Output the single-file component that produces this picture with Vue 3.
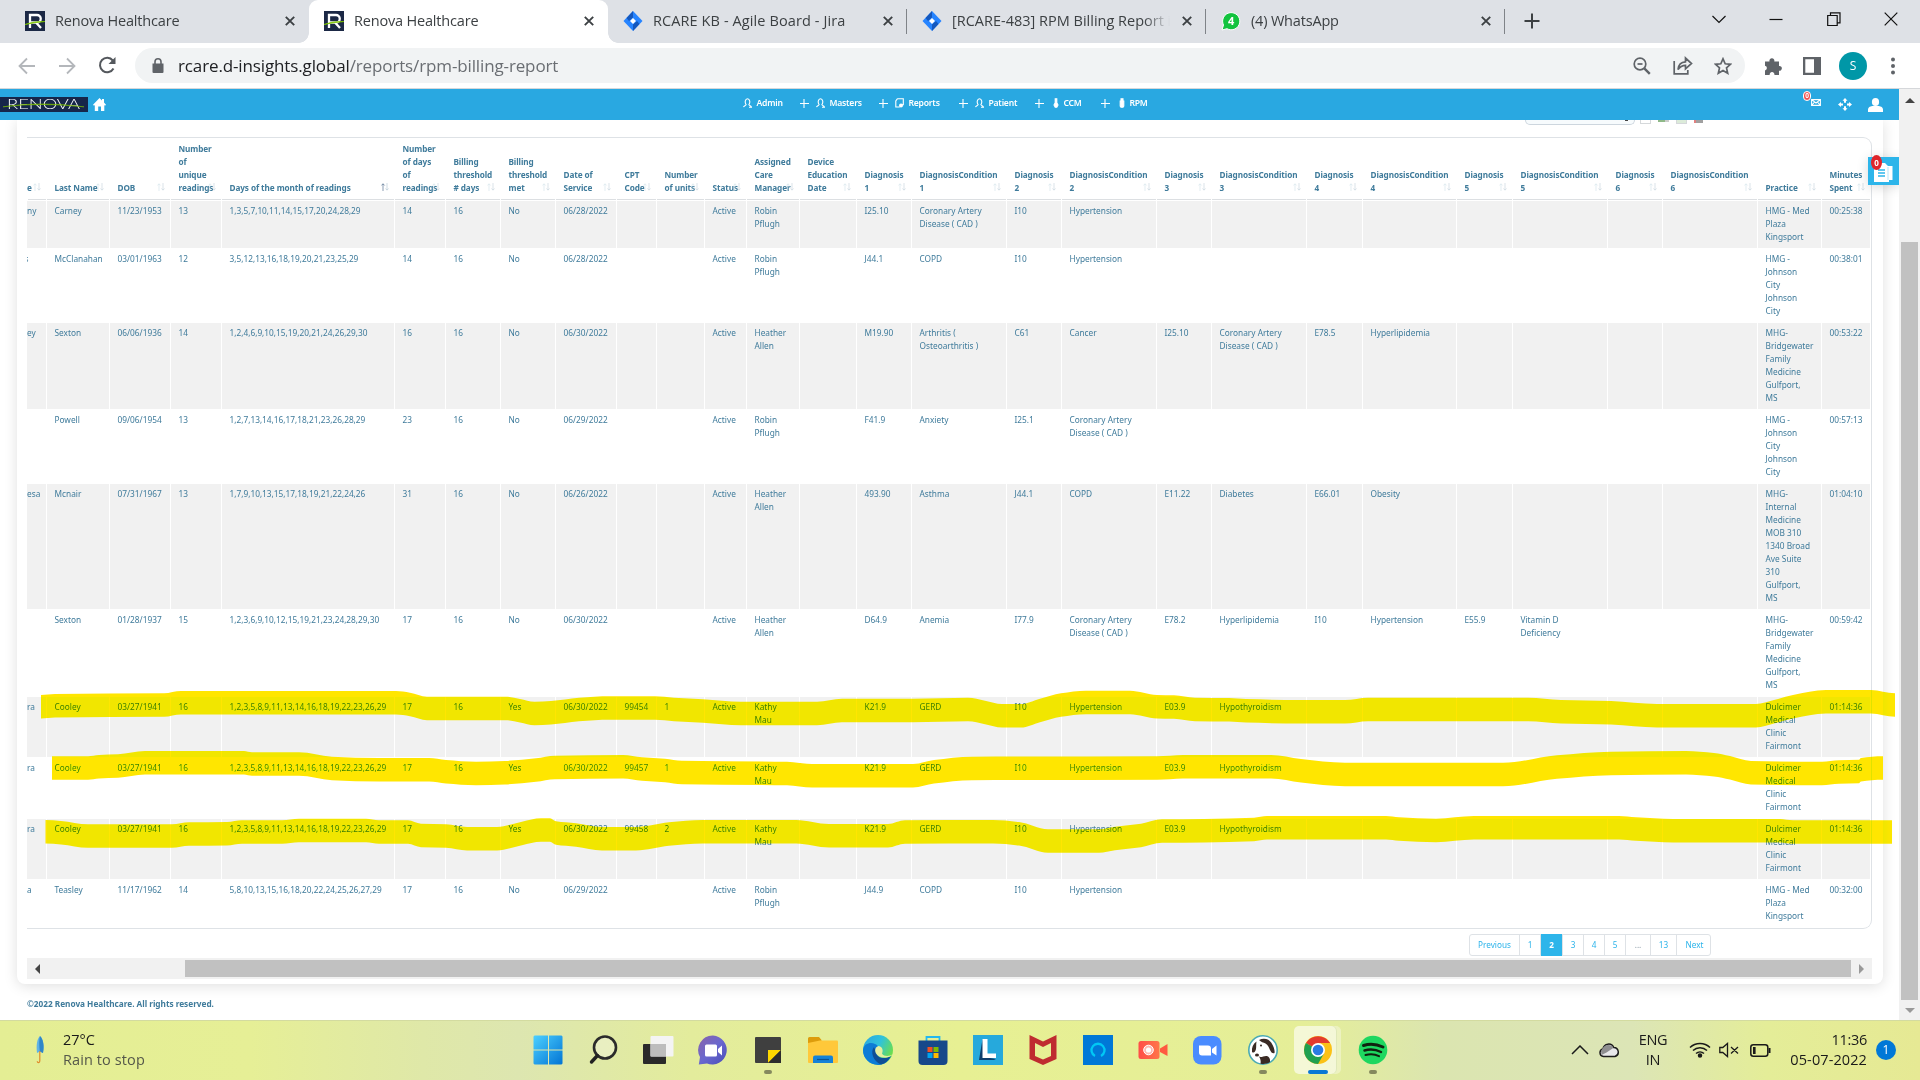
<script setup>
const tabs = [
  { icon: 'renova', title: 'Renova Healthcare' },
  { icon: 'renova', title: 'Renova Healthcare', active: true },
  { icon: 'jira', title: 'RCARE KB - Agile Board - Jira', sep: true, wide: true },
  { icon: 'jira', title: '[RCARE-483] RPM Billing Report i', sep: true, fade: true },
  { icon: 'wa', title: '(4) WhatsApp', sep: true },
]

const menu = [
  { label: 'Admin', icon: 'user', w: 57, first: true },
  { label: 'Masters', icon: 'user', w: 79 },
  { label: 'Reports', icon: 'doc', w: 80 },
  { label: 'Patient', icon: 'user', w: 76 },
  { label: 'CCM', icon: 'thermo', w: 66 },
  { label: 'RPM', icon: 'device', w: 66 },
]

const edges = [27, 46, 109, 170, 221, 394, 445, 500, 555, 616, 656, 704, 746, 799, 856, 911, 1006, 1061, 1156, 1211, 1306, 1362, 1456, 1512, 1607, 1662, 1757, 1821, 1870]
const widths = edges.slice(1).map((e, i) => e - edges[i])

const heads = [
  ['e'], ['Last Name'], ['DOB'], ['Number', 'of', 'unique', 'readings'], ['Days of the month of readings'],
  ['Number', 'of days', 'of', 'readings'], ['Billing', 'threshold', '# days'], ['Billing', 'threshold', 'met'],
  ['Date of', 'Service'], ['CPT', 'Code'], ['Number', 'of units'], ['Status'], ['Assigned', 'Care', 'Manager'],
  ['Device', 'Education', 'Date'], ['Diagnosis', '1'], ['DiagnosisCondition', '1'], ['Diagnosis', '2'],
  ['DiagnosisCondition', '2'], ['Diagnosis', '3'], ['DiagnosisCondition', '3'], ['Diagnosis', '4'],
  ['DiagnosisCondition', '4'], ['Diagnosis', '5'], ['DiagnosisCondition', '5'], ['Diagnosis', '6'],
  ['DiagnosisCondition', '6'], ['Practice'], ['Minutes', 'Spent'],
]

const CAD = 'Coronary Artery|Disease ( CAD )'
function row(h, s) {
  const cells = s.split(';').map((c) => c.trim().split('|'))
  return { h, cells }
}
const cooley = (cpt, n) =>
  `ra;Cooley;03/27/1941;16;1,2,3,5,8,9,11,13,14,16,18,19,22,23,26,29;17;16;Yes;06/30/2022;${cpt};${n};Active;Kathy|Mau;;K21.9;GERD;I10;Hypertension;E03.9;Hypothyroidism;;;;;;;Dulcimer|Medical|Clinic|Fairmont;01:14:36`
const rows = [
  row(48, `ny;Carney;11/23/1953;13;1,3,5,7,10,11,14,15,17,20,24,28,29;14;16;No;06/28/2022;;;Active;Robin|Pflugh;;I25.10;${CAD};I10;Hypertension;;;;;;;;;HMG - Med|Plaza|Kingsport;00:25:38`),
  row(74, `s;McClanahan;03/01/1963;12;3,5,12,13,16,18,19,20,21,23,25,29;14;16;No;06/28/2022;;;Active;Robin|Pflugh;;J44.1;COPD;I10;Hypertension;;;;;;;;;HMG -|Johnson|City|Johnson|City;00:38:01`),
  row(87, `ey;Sexton;06/06/1936;14;1,2,4,6,9,10,15,19,20,21,24,26,29,30;16;16;No;06/30/2022;;;Active;Heather|Allen;;M19.90;Arthritis (|Osteoarthritis );C61;Cancer;I25.10;${CAD};E78.5;Hyperlipidemia;;;;;MHG-|Bridgewater|Family|Medicine|Gulfport,|MS;00:53:22`),
  row(74, `;Powell;09/06/1954;13;1,2,7,13,14,16,17,18,21,23,26,28,29;23;16;No;06/29/2022;;;Active;Robin|Pflugh;;F41.9;Anxiety;I25.1;${CAD};;;;;;;;;HMG -|Johnson|City|Johnson|City;00:57:13`),
  row(126, `esa;Mcnair;07/31/1967;13;1,7,9,10,13,15,17,18,19,21,22,24,26;31;16;No;06/26/2022;;;Active;Heather|Allen;;493.90;Asthma;J44.1;COPD;E11.22;Diabetes;E66.01;Obesity;;;;;MHG-|Internal|Medicine|MOB 310|1340 Broad|Ave Suite|310|Gulfport,|MS;01:04:10`),
  row(87, `;Sexton;01/28/1937;15;1,2,3,6,9,10,12,15,19,21,23,24,28,29,30;17;16;No;06/30/2022;;;Active;Heather|Allen;;D64.9;Anemia;I77.9;${CAD};E78.2;Hyperlipidemia;I10;Hypertension;E55.9;Vitamin D|Deficiency;;;MHG-|Bridgewater|Family|Medicine|Gulfport,|MS;00:59:42`),
  row(61, cooley('99454', 1)),
  row(61, cooley('99457', 1)),
  row(61, cooley('99458', 2)),
  row(48, `a;Teasley;11/17/1962;14;5,8,10,13,15,16,18,20,22,24,25,26,27,29;17;16;No;06/29/2022;;;Active;Robin|Pflugh;;J44.9;COPD;I10;Hypertension;;;;;;;;;HMG - Med|Plaza|Kingsport;00:32:00`),
]

const pages = [
  { t: 'Previous', w: 50 }, { t: '1', w: 21 }, { t: '2', w: 22, on: true }, { t: '3', w: 21 }, { t: '4', w: 21 },
  { t: '5', w: 21 }, { t: '...', w: 25, off: true }, { t: '13', w: 26 }, { t: 'Next', w: 35 },
]

// Upper edge of every marker stroke; the lower edge runs 23.5px below it.
const marks = [
  [[41, 695], [55, 694], [164, 693.3], [181, 691], [396, 691], [410, 692.7], [427, 696.7], [505, 696.7], [520, 699], [534.5, 701.7], [551, 701], [579, 697.7], [610, 696.3], [655, 696.3], [674, 697.7], [703, 699.3], [741, 701.7], [817, 701.7], [842, 698.7], [913, 698.7], [968, 697.7], [985, 700.7], [1002, 704], [1021, 704], [1040, 698.7], [1061, 693.3], [1086, 690.7], [1130, 690.7], [1157, 695], [1174, 695.3], [1195, 697.7], [1229, 698], [1246, 699], [1300, 700], [1345, 700], [1368, 697.7], [1528, 697.7], [1561, 700], [1611, 701], [1657, 704], [1756, 704], [1774, 700], [1793, 695], [1826, 690], [1871, 690], [1895, 693.3]],
  [[52, 756.3], [88, 756.3], [99, 755], [118, 754.3], [145, 751], [244, 751], [252, 752.3], [299, 752.3], [332, 756.7], [379, 758], [429, 758], [446, 760], [476, 761.7], [505, 761], [536, 758.3], [555, 755.7], [623, 755], [642, 757.3], [665, 758.7], [682, 760.7], [787, 761.7], [812, 764], [913, 764], [934, 760], [972, 756.7], [1157, 756.3], [1183, 755], [1271, 755], [1301, 759], [1345, 762.7], [1503, 762.7], [1557, 755.3], [1611, 751.7], [1686, 751], [1714, 753], [1730, 756], [1751, 761], [1822, 761.7], [1839, 760.3], [1859, 759.7], [1861, 758], [1883, 756.3]],
  [[45.5, 820], [61, 821], [88, 824.3], [172, 824.3], [189, 822.3], [227, 822], [242, 820.3], [282, 820.3], [299, 818.7], [366, 818.7], [379, 820.3], [408, 820.3], [421, 823.7], [446, 824.3], [467, 827], [497, 827], [522, 821.7], [541, 818.3], [550, 818.3], [556, 821.3], [576, 823.3], [602, 827], [636, 827], [669, 822.3], [703, 820], [796, 820], [829, 824], [888, 824], [905, 820.3], [993, 820], [1019, 822], [1048, 829.3], [1099, 829.3], [1115, 826.7], [1141, 823.7], [1162, 819.3], [1204, 819], [1254, 817.7], [1267, 816], [1386, 816], [1399, 817.3], [1436, 818.7], [1474, 816], [1619, 816], [1636, 817.3], [1673, 819], [1780, 819], [1793, 820.3], [1892, 820.3]],
]
function curve(p) {
  const d = p.slice(1).map((q, i) => (q[1] - p[i][1]) / (q[0] - p[i][0]))
  const m = p.map((_, i) => {
    const a = d[i - 1], b = d[i]
    return a === undefined || b === undefined || a * b <= 0 ? 0 : (2 * a * b) / (a + b)
  })
  return p.slice(1).map((q, i) => {
    const k = (q[0] - p[i][0]) / 3
    return `C${p[i][0] + k} ${p[i][1] + m[i] * k} ${q[0] - k} ${q[1] - m[i + 1] * k} ${q[0]} ${q[1]}`
  }).join('')
}
function band(p) {
  const low = p.map(([x, y]) => [x, y + 23.5]).reverse()
  return `M${p[0]}${curve(p)}L${low[0]}${curve(low)}Z`
}
const bands = marks.map(band)
</script>

<template>
  <div class="screen">
    <header class="tabstrip">
      <div v-for="(t, i) in tabs" :key="i" class="tab" :class="{ active: t.active, sep: t.sep }">
        <svg v-if="t.icon === 'renova'" class="fav" viewBox="0 0 20 20">
          <rect width="20" height="20" fill="#1b2845" />
          <path d="M5 17V4h7a3.6 3.6 0 0 1 0 7.500H5M11 11.500l5 5.500" fill="none" stroke="#fff" stroke-width="2.300" />
          <path d="M0 13.500Q8 10 20 10.500Q9 11.500 0 13.500Z" fill="#8bd000" stroke="#7cc400" stroke-width=".7" />
        </svg>
        <svg v-else-if="t.icon === 'jira'" class="fav" viewBox="0 0 20 20">
          <path d="M10 0l9.500 10L10 20 .5 10z" fill="#2684ff" />
          <path d="M10 0v6.500L6 10 3.500 7zM10 20v-6.500l4-3.500 2.500 3z" fill="#1558bd" />
          <path d="M10 7l3 3-3 3-3-3z" fill="#fff" />
        </svg>
        <svg v-else class="fav" viewBox="0 0 20 20">
          <path d="M1 19l1.500-5A8.600 8.600 0 1 1 6 17.700z" fill="#12c33e" stroke="#fff" stroke-width="1" />
          <text x="10.200" y="14" text-anchor="middle" class="wa4">4</text>
        </svg>
        <span class="ttl" :class="{ fade: t.fade, wide: t.wide }">{{ t.title }}</span>
        <svg class="x" viewBox="0 0 10 10"><path d="M.8.8l8.400 8.400M9.200.8L.8 9.200" stroke="#3c4043" stroke-width="1.900" /></svg>
      </div>
      <svg class="plus" viewBox="0 0 16 16"><path d="M8 .5v15M.5 8h15" stroke="#3c4043" stroke-width="2" /></svg>
      <div class="winctl">
        <svg width="14" height="14" viewBox="0 0 14 14"><path d="M.5 4l6.500 6.500L13.500 4" /></svg>
        <svg width="14" height="14" viewBox="0 0 14 14"><path d="M.5 7.500h13" /></svg>
        <svg width="14" height="14" viewBox="0 0 14 14"><path d="M.7 3.500h9.500v10H.7zM3.500 3.500V.8h9.500v10h-2.500" /></svg>
        <svg width="14" height="14" viewBox="0 0 14 14"><path d="M.7.7l12.600 12.600M13.300.7L.7 13.300" /></svg>
      </div>
    </header>

    <div class="toolbar">
      <div class="navbtns">
        <svg width="18" height="18" viewBox="0 0 18 18"><path d="M17 9H2M9 1.500L1.500 9 9 16.500" fill="none" stroke="#b4b7bb" stroke-width="1.800" /></svg>
        <svg width="18" height="18" viewBox="0 0 18 18"><path d="M1 9h15M9 1.500L16.500 9 9 16.500" fill="none" stroke="#b4b7bb" stroke-width="1.800" /></svg>
        <svg width="19" height="19" viewBox="0 0 19 19"><path d="M15.500 12.500A7.200 7.200 0 1 1 14.800 4.500" fill="none" stroke="#54585d" stroke-width="2" /><path d="M17.500 1v7h-7z" fill="#54585d" /></svg>
      </div>
      <div class="omni">
        <svg class="lock" width="12" height="15" viewBox="0 0 12 15"><path d="M.5 5.500h11V14a1 1 0 0 1-1 1h-9a1 1 0 0 1-1-1z" fill="#5f6368" /><path d="M3 6V3.800a3 3 0 0 1 6 0V6" fill="none" stroke="#5f6368" stroke-width="1.600" /></svg>
        <span class="url"><b>rcare.d-insights.global</b>/reports/rpm-billing-report</span>
        <div class="oicons">
          <svg width="18" height="18" viewBox="0 0 18 18"><circle cx="7" cy="7" r="5.800" /><path d="M11.300 11.300l5.500 5.500" stroke-width="2.400" /><path d="M4.500 7h5" /></svg>
          <svg width="20" height="19" viewBox="0 0 20 19"><path d="M1.200 5v12.800h13.600V14" /><path d="M5 13.500C5.500 8.500 8 6 12.500 5.800V2l6 5.500-6 5.300V9.300C9 9.300 7 10.500 5 13.500z" /></svg>
          <svg width="18" height="18" viewBox="0 0 18 18"><path d="M9 1.800l2.200 5 5.300.5-4 3.600 1.200 5.300L9 13.400l-4.700 2.800 1.200-5.300-4-3.600 5.300-.5z" /></svg>
        </div>
      </div>
      <div class="ext">
        <svg width="20" height="20" viewBox="0 0 20 20"><path d="M2 5.500h4.500a2.500 2.500 0 1 1 4.800 0H16V10a2.400 2.400 0 1 1 0 4.700V19h-4.600a2.400 2.400 0 1 0-4.700 0H2v-4.600a2.400 2.400 0 0 0 0-4.700z" fill="#5f6368" /></svg>
        <svg width="18" height="18" viewBox="0 0 18 18"><path d="M0 0h18v18H0zM2.300 2.300v13.400H11V2.300z" fill="#5f6368" fill-rule="evenodd" /></svg>
        <span class="avatar">S</span>
        <svg width="6" height="18" viewBox="0 0 6 18" fill="#5f6368"><circle cx="3" cy="2.500" r="2" /><circle cx="3" cy="9" r="2" /><circle cx="3" cy="15.500" r="2" /></svg>
      </div>
    </div>

    <div class="viewport">
      <main class="page">
        <nav class="appnav">
          <svg class="logo" width="88" height="15" viewBox="0 0 88 15">
            <rect width="88" height="15" fill="#16264a" />
            <text x="7" y="12" textLength="73" lengthAdjust="spacingAndGlyphs" class="logotxt">RENOVA</text>
            <path d="M3 9.800Q40 4 84 9.800Q40 5.200 3 9.800Z" fill="#86c800" stroke="#7cc000" stroke-width=".5" />
          </svg>
          <svg class="home" width="13" height="13" viewBox="0 0 13 13"><path d="M6.500 0L9 2.500V1h2v3.500L13 6.700l-1 1-.7-.6V13H8V8.500H5.200V13H1.800V7.100l-.8.600-1-1z" fill="#fff" /></svg>
          <div class="menu">
            <span v-for="m in menu" :key="m.label" class="mi" :style="{ width: m.w + 'px' }">
              <svg v-if="!m.first" class="mplus" width="9" height="9" viewBox="0 0 9 9"><path d="M4 0v9M0 4.500h9" /></svg>
              <svg v-if="m.icon === 'user'" class="mic" width="9" height="10" viewBox="0 0 9 10"><path d="M.5 9.200c.5-1.700 2-1.200 2.600-2.600C1.500 4.500 2.200.7 4.500.7S7.500 4.500 5.900 6.600c.6 1.400 2.100.9 2.600 2.600H6" /></svg>
              <svg v-else-if="m.icon === 'doc'" class="mic" width="9" height="10" viewBox="0 0 9 10"><path d="M2.500.7h5.800v6H6.500M2.500.7L.8 3v6h4" /><circle cx="6" cy="7.500" r="2" fill="#fff" /></svg>
              <svg v-else-if="m.icon === 'thermo'" class="mic thin" width="6" height="10" viewBox="0 0 6 10"><path d="M2.200.8h1.600v4L5 7 3.800 9.200H2.200L1 7l1.200-2.200z" fill="#fff" /></svg>
              <svg v-else class="mic thin" width="6" height="10" viewBox="0 0 6 10"><path d="M2 .7h2v1.500H2zM1.200 3h3.600v5L4 9.300H2L1.200 8z" fill="#fff" /></svg>
              <span>{{ m.label }}</span>
            </span>
          </div>
          <div class="navright">
            <span class="mail"><span class="zero">0</span>
              <svg width="10" height="7" viewBox="0 0 10 7"><path d="M.6.6h8.800v5.800H.6zM.6.6L5 4 9.400.6M.6 6.400L3.600 3M9.400 6.400L6.400 3" fill="none" stroke="#fff" stroke-width="1.100" /></svg>
            </span>
            <svg width="14" height="13" viewBox="0 0 14 13" fill="#fff"><path d="M7 0l2.500 2.700H8v2H6v-2H4.500zM7 13l2.500-2.700H8v-2H6v2H4.500zM0 6.500L3 4v1.500h2v2H3V9zM14 6.500L11 4v1.500H9v2h2V9z" /></svg>
            <svg width="15" height="14" viewBox="0 0 15 14" fill="#fff"><ellipse cx="7.500" cy="4" rx="3.600" ry="4" /><path d="M0 14v-2.500C0 9 3 8 5 8h5c2 0 5 1 5 3.500V14z" /></svg>
          </div>
        </nav>

        <section class="card">
          <div class="tools">
            <div class="select"><i></i></div>
            <i class="t1"></i><i class="t2"></i><i class="t3"></i><i class="t4"></i>
          </div>
          <div class="tablebox">
            <table>
              <colgroup><col v-for="(w, i) in widths" :key="i" :style="{ width: w + 'px' }" /></colgroup>
              <thead>
                <tr>
                  <th v-for="(h, i) in heads" :key="i">
                    <div v-for="l in h" :key="l">{{ l }}</div>
                    <svg class="sort" :class="{ on: i === 4 }" width="8" height="8" viewBox="0 0 8 8">
                      <path class="up" d="M2 8V.8M.3 2.500L2 .8l1.700 1.700" /><path class="dn" d="M6 0v7M4.500 5.500L6 7.200l1.500-1.700" />
                    </svg>
                  </th>
                </tr>
              </thead>
              <tbody>
                <tr v-for="(r, i) in rows" :key="i" :style="{ height: r.h + 'px' }">
                  <td v-for="(c, j) in r.cells" :key="j"><div v-for="(l, k) in c" :key="k" :class="{ cut: l === 's' }">{{ l }}</div></td>
                </tr>
              </tbody>
            </table>
          </div>
          <div class="pager">
            <span v-for="p in pages" :key="p.t" :class="{ on: p.on, off: p.off }" :style="{ width: p.w + 'px' }">{{ p.t }}</span>
          </div>
          <div class="hscroll"><i class="la"></i><div class="hthumb"></div><i class="ra"></i></div>
        </section>
        <footer>©2022 Renova Healthcare. All rights reserved.</footer>

        <div class="notes">
          <svg width="19" height="20" viewBox="0 0 19 20"><path d="M0 3h4V1h7l3 3h4.500v14H15v2H0z" fill="#fff" /><path d="M4 8h7M4 11h7M4 14h7" stroke="#2db5ea" stroke-width="1.300" /><path d="M14 5v13" stroke="#a5def6" stroke-width=".8" /></svg>
          <span>0</span>
        </div>
      </main>
      <div class="vscroll"><i class="ua"></i><div class="vthumb"></div><i class="da"></i></div>
    </div>

    <div class="taskbar">
      <div class="weather">
        <svg width="10" height="28" viewBox="0 0 10 28"><path d="M5 0C2 3 1 9 2 17l3-1.500L8 17C9.500 9 8 3 5 0z" fill="#5fb2e6" /><path d="M5 0C4 4 4 9 4.800 15.500L8 17C9.500 9 8 3 5 0z" fill="#2f86c8" /><path d="M4.800 15v10c0 2-2.500 2-2.500.3" fill="none" stroke="#e08a2a" stroke-width="1.200" /></svg>
        <div><p>27°C</p><p class="dim">Rain to stop</p></div>
      </div>
      <div class="apps">
        <span><svg width="30" height="30" viewBox="0 0 30 30">
          <defs><linearGradient id="w" x1="0" y1="0" x2="1" y2="1"><stop offset="0" stop-color="#4cd0ff" /><stop offset="1" stop-color="#0274d4" /></linearGradient></defs>
          <path d="M1.500.5H15v14H.5V1.500zM16 .5h12.500l1 1v13H16zM.5 15.500H15v14H1.500l-1-1zM16 15.500h13.500v13l-1 1H16z" fill="url(#w)" /></svg></span>
        <span><svg width="30" height="30" viewBox="0 0 30 30"><circle cx="17" cy="12.500" r="11" fill="#fff" fill-opacity=".3" stroke="#2b2b2b" stroke-width="2.600" /><path d="M9.500 20.500L3.500 27" stroke="#222" stroke-width="3.400" stroke-linecap="round" /></svg></span>
        <span><svg width="32" height="30" viewBox="0 0 32 30"><rect x="1" y="9" width="23" height="20" rx="1" fill="#2a2a2a" /><rect x="8.500" y="1" width="23" height="20.500" rx="1" fill="#f4f4f4" /><path d="M8.500 9H24v12.500H8.500z" fill="#bdbdbd" /></svg></span>
        <span><svg width="30" height="30" viewBox="0 0 30 30">
          <defs><linearGradient id="c" x1="0" y1="0" x2="1" y2="1"><stop offset="0" stop-color="#8b64a8" /><stop offset=".5" stop-color="#6a68cf" /><stop offset="1" stop-color="#4a4cb8" /></linearGradient></defs>
          <path d="M15 .5A14.500 14.500 0 1 1 9 28.500L.8 29.500 2 22A14.500 14.500 0 0 1 15 .5z" fill="url(#c)" /><rect x="7" y="9.500" width="12" height="12" rx="1.500" fill="#fff" /><path d="M20 14l4-3.500v10L20 17z" fill="#fff" /></svg></span>
        <span class="run"><svg width="28" height="28" viewBox="0 0 28 28"><rect x="1" y="1" width="26" height="26" rx="1" fill="#3f3f3f" /><path d="M14 14h13L14 27z" fill="#ffd800" /><path d="M27 14v13H14z" fill="#2d2d2d" /></svg></span>
        <span><svg width="30" height="28" viewBox="0 0 30 28"><path d="M0 2.500A1.500 1.500 0 0 1 1.500 1H11l2.500 3v4H0z" fill="#dd9c0c" /><path d="M0 7l12-2.500h17a1 1 0 0 1 1 1V26a1 1 0 0 1-1 1H1a1 1 0 0 1-1-1z" fill="#ffc83a" /><path d="M5 27v-5.500a2 2 0 0 1 2-2h16a2 2 0 0 1 2 2V27z" fill="#1582d8" /><path d="M9 23.500h12" stroke="#0b5294" stroke-width="1.200" /></svg></span>
        <span><svg width="30" height="30" viewBox="0 0 30 30">
          <defs><linearGradient id="e" x1="0" y1="0" x2="1" y2=".5"><stop offset="0" stop-color="#2aa5e0" /><stop offset=".55" stop-color="#2fc2dc" /><stop offset="1" stop-color="#6ade50" /></linearGradient></defs>
          <circle cx="15" cy="15" r="15" fill="url(#e)" />
          <path d="M0 15C1 8 8 7 12 9c5 2 3 6 1 8-1 6 8 9 15 4-3 7-9 9-13 9A15 15 0 0 1 0 15z" fill="#0d7cd6" />
          <path d="M11 12c-4 5-1 14 7 17.500 4-.8 7.500-3.500 10-8.500-7 4-14 2-15-4z" fill="#0f4f96" />
          <path d="M30 19c-3 2.500-9 3-11-.5 1-1.500 1.500-7-3.500-7.500-3 .8-4.200 4-2.600 7.200C15 22.500 22 24 28 21z" fill="#e6efa0" /></svg></span>
        <span><svg width="30" height="30" viewBox="0 0 30 30"><path d="M8.500 7V2h13v5" fill="none" stroke="#22b8f0" stroke-width="1.800" /><path d="M.5 5.500h29V26a4 4 0 0 1-4 4h-21a4 4 0 0 1-4-4z" fill="#17488a" /><path d="M9.500 12h5v5h-5z" fill="#f25022" /><path d="M15.500 12h5v5h-5z" fill="#7fba00" /><path d="M9.500 18h5v5h-5z" fill="#00a4ef" /><path d="M15.500 18h5v5h-5z" fill="#ffb900" /></svg></span>
        <span><svg width="30" height="30" viewBox="0 0 30 30"><rect width="30" height="30" fill="#26a9dc" /><path d="M9.500 4L6 25h15l2-1-12-2z" fill="#0d3f6d" /><path d="M9.500 4h5v14.500H23v4.500H9.500z" fill="#fff" /></svg></span>
        <span><svg width="28" height="30" viewBox="0 0 28 30"><path d="M.5 0L14 6.500 27.500 0v24L14 30 .5 24zM6 8v13l8 3.500 8-3.500V8l-8 4z" fill="#bf2c30" fill-rule="evenodd" /></svg></span>
        <span><svg width="30" height="30" viewBox="0 0 30 30"><rect width="30" height="30" fill="#0078d7" /><path d="M12 21A6.500 6.500 0 1 1 18 21" fill="none" stroke="#00c8f5" stroke-width="2.300" /></svg></span>
        <span><svg width="30" height="20" viewBox="0 0 30 20"><defs><linearGradient id="r"><stop offset="0" stop-color="#ff4d48" /><stop offset="1" stop-color="#ff7648" /></linearGradient></defs><rect x=".5" y="1" width="21" height="18" rx="2.500" fill="url(#r)" /><path d="M22 8.500L29.500 4v12L22 12z" fill="#ff5a40" /><circle cx="10.500" cy="10" r="4.800" fill="#ffb8b0" stroke="#fff" /><circle cx="10.500" cy="10" r="2.600" fill="#fff" /></svg></span>
        <span><svg width="29" height="29" viewBox="0 0 29 29"><rect width="28.500" height="28.500" rx="8" fill="#4a8cff" /><path d="M6 9.500h9a3 3 0 0 1 3 3v7H9a3 3 0 0 1-3-3zM19 13l4.500-3.500v10L19 16.500z" fill="#fff" /></svg></span>
        <span class="run"><svg width="30" height="30" viewBox="0 0 30 30">
          <circle cx="15" cy="15" r="14.200" fill="#fff" stroke="#4aaab4" stroke-width="1.600" />
          <path d="M8.500 6.500C5 9 3.500 12.500 4 17c2 1.500 3.500-.5 4-3 .4-2.500 0-5 .5-7.500z" fill="#3a2a24" />
          <path d="M11 5c5-2.500 10-1 12.500 3 2.500 4 3.500 8 3 10-1.500 1-3.500-.5-4.500-3-1.200-3-2-5-4.500-6.500C15.500 7.500 13 7 11 5z" fill="#3a2a24" />
          <path d="M11 21.500c2 1.500 5-1 8-.5 2 .5 3.500 3 3 6-3 2-6.500 2.300-9.500 1.700C13 26 12.500 24 11 21.500z" fill="#3a2a24" />
          <circle cx="13" cy="10.500" r="1" fill="#3a2a24" />
          <ellipse cx="9" cy="20" rx="2" ry="1.500" fill="#3a2a24" /></svg></span>
        <span class="run cur"><svg width="28" height="28" viewBox="0 0 28 28"><circle cx="14" cy="14" r="14" fill="#fbc116" /><path d="M14 14L2 7A14 14 0 0 1 26.100 7H14z" fill="#e33b2e" /><path d="M14 14L1.900 7A14 14 0 0 0 14 28l6-10.500z" fill="#1fa050" /><circle cx="14" cy="14" r="7" fill="#fff" /><circle cx="14" cy="14" r="5.300" fill="#2a7be4" /></svg></span>
        <span class="run"><svg width="30" height="30" viewBox="0 0 30 30"><circle cx="15" cy="15" r="14.300" fill="#1ed760" /><path d="M5.500 10.500Q15 7.500 25 12" stroke-width="3" /><path d="M6.500 15.500Q15 13 23 17" stroke-width="2.500" /><path d="M7.500 20Q15 18 21 21.200" stroke-width="2" /></svg></span>
      </div>
      <div class="tray">
        <svg class="chev" width="18" height="10" viewBox="0 0 18 10"><path d="M1 9l8-8 8 8" fill="none" stroke="#1a1a1a" stroke-width="1.500" /></svg>
        <svg class="cloud" width="21" height="15" viewBox="0 0 21 15"><path d="M4.500 13.500A3.800 3.800 0 0 1 4 6C5 .2 12.500-.6 14.800 4.500A4.600 4.600 0 0 1 16 13.500z" fill="#e8e8ea" stroke="#1c1c1c" stroke-width="1.500" /><path d="M2 8C4 5 5 2.500 8 2c3-.5 5.500.5 6.300 3L7.500 9.500 2.500 12z" fill="#8e8e90" /></svg>
        <div class="lang"><p>ENG</p><p>IN</p></div>
        <svg class="wifi" width="22" height="16" viewBox="0 0 22 16" fill="none" stroke="#1a1a1a" stroke-width="1.500"><path d="M1 5.500a14.500 14.500 0 0 1 20 0M4 8.500a10 10 0 0 1 14 0M7 11.500a6 6 0 0 1 8 0" /><circle cx="11" cy="13.500" r="1.500" fill="#1a1a1a" /></svg>
        <svg class="spk" width="20" height="16" viewBox="0 0 20 16" fill="none" stroke="#1a1a1a" stroke-width="1.300"><path d="M.8 5.500h3L8.500 1.500v13L3.800 10.500h-3zM12 5l7 6.500M19 5l-7 6.500" /></svg>
        <svg class="bat" width="21" height="13" viewBox="0 0 21 13"><rect x=".8" y=".8" width="17" height="11.400" rx="2.500" fill="none" stroke="#1a1a1a" stroke-width="1.500" /><path d="M3 3h2.600v7H3zM18.500 4h2v5h-2z" fill="#1a1a1a" /></svg>
        <div class="clock"><p>11:36</p><p class="date">05-07-2022</p></div>
        <span class="badge">1</span>
      </div>
    </div>

    <svg class="marker" width="1920" height="1080" viewBox="0 0 1920 1080"><path v-for="(b, i) in bands" :key="i" :d="b" /></svg>
  </div>
</template>

<style>
body { margin: 0; background: #fff; }
</style>
<style scoped>
* { box-sizing: border-box; }
p { margin: 0; }
.screen { position: relative; width: 1920px; height: 1080px; overflow: hidden; background: #fff; font-family: "Open Sans", "Noto Sans", sans-serif; display: flex; flex-direction: column; }
.marker { position: absolute; left: 0; top: 0; fill: #ffe600; mix-blend-mode: darken; pointer-events: none; }

.tabstrip { flex: none; height: 43px; background: #dee1e6; display: flex; padding-left: 10px; }
.tab { width: 299px; flex: none; display: flex; align-items: center; padding: 0 14px 1px 15px; position: relative; }
.tab.active { background: #fff; border-radius: 9px 9px 0 0; }
.tab.active::before, .tab.active::after { content: ""; position: absolute; bottom: 0; width: 10px; height: 10px; }
.tab.active::before { left: -10px; background: radial-gradient(circle at 0 0, transparent 9.5px, #fff 10px); }
.tab.active::after { right: -10px; background: radial-gradient(circle at 100% 0, transparent 9.5px, #fff 10px); }
.tab.sep::after { content: ""; position: absolute; right: 0; top: 9px; height: 25px; width: 1px; background: #7f8388; }
.fav { width: 20px; height: 20px; flex: none; margin-right: 10px; }
.wa4 { font: bold 11px "Open Sans", sans-serif; fill: #fff; }
.ttl { flex: 1; font-size: 14.5px; letter-spacing: -.18px; line-height: 20px; margin-top: -1px; color: #3c4043; white-space: nowrap; overflow: hidden; }
.ttl.wide { letter-spacing: .1px; }
.fade { letter-spacing: 0; -webkit-mask-image: linear-gradient(90deg, #000 88%, transparent); mask-image: linear-gradient(90deg, #000 88%, transparent); }
.x { width: 10px; height: 10px; flex: none; margin-left: 12px; }
.plus { width: 16px; height: 16px; align-self: center; margin-left: 19px; margin-top: -1px; flex: none; }
.winctl { margin-left: auto; margin-right: 22px; height: 37px; display: flex; align-items: center; gap: 43.5px; }
.winctl path { fill: none; stroke: #111; stroke-width: 1.2; }

.toolbar { flex: none; height: 46px; border-bottom: 1px solid #d5d7da; display: flex; align-items: center; padding-bottom: 0; background: #fff; }
.navbtns { width: 135px; padding-left: 18px; display: flex; gap: 22px; align-items: center; }
.omni { width: 1610px; height: 35px; border-radius: 18px; background: #f1f3f4; display: flex; align-items: center; padding: 0 13px 0 17px; }
.lock { margin-right: 14px; }
.url { font-size: 17px; letter-spacing: -.13px; color: #6a6e73; white-space: nowrap; }
.url b { font-weight: 400; color: #202124; }
.oicons { margin-left: auto; display: flex; gap: 21.5px; align-items: center; }
.oicons svg { fill: none; stroke: #5f6368; stroke-width: 1.7; }
.ext { display: flex; align-items: center; margin-left: 18px; }
.ext svg:nth-child(1) { margin-right: 20px; }
.avatar { margin: 0 22.5px 0 18px; width: 28px; height: 28px; border-radius: 50%; background: #0097a7; color: #fff; font-size: 12px; display: flex; align-items: center; justify-content: center; }

.viewport { flex: none; height: 931px; display: flex; font-family: "Noto Sans", "Open Sans", sans-serif; }
.page { width: 1899px; position: relative; overflow: hidden; display: flex; flex-direction: column; background: #fff; }
.appnav { flex: none; height: 31px; background: #29a8e1; display: flex; align-items: center; position: relative; z-index: 1; }
.logotxt { font: 300 13.5px "Lato", sans-serif; fill: #fff; }
.home { margin-left: 5px; }
.menu { margin-left: 636.5px; display: flex; align-items: center; color: #fff; font-size: 8.6px; font-weight: 600; letter-spacing: -.22px; height: 28px; margin-top: -3px; }
.mi { display: flex; align-items: center; white-space: nowrap; height: 14px; }
.mplus { margin-right: 7px; }
.mic { margin-right: 5px; }
.mic.thin { margin-left: 2px; }
.mi path { fill: none; stroke: #fff; stroke-width: 1.1; }
.mi .thin path { fill: #fff; }
.navright { margin-left: auto; margin-right: 16px; display: flex; align-items: center; }
.mail { position: relative; display: flex; margin-right: 17px; margin-top: -4px; }
.mail + svg { margin-right: 16px; }
.zero { position: absolute; left: -8px; top: -8px; width: 8px; height: 10px; border-radius: 4px; background: #f3504f; border: 1px solid #fff; color: #fff; font-size: 6.5px; line-height: 8px; text-align: center; font-weight: 700; }

.card { flex: none; height: 864px; margin: 0 16.5px 0 17px; border-radius: 0 0 8px 8px; background: #fff; box-shadow: 0 2px 14px rgba(0, 0, 0, .13); padding: 0 10px; display: flex; flex-direction: column; }
.tools { height: 17px; display: flex; align-items: flex-start; padding-left: 1498px; flex: none; }
.select { width: 110px; height: 5px; border: 1px solid #cdd6de; border-top: 0; border-radius: 0 0 6px 6px; background: #f7fbfd; position: relative; margin-right: 5px; }
.select i { position: absolute; right: 6px; top: 0; width: 3px; height: 1px; background: #444; }
.tools > i { width: 11px; height: 4px; border: 1px solid #d5d8da; border-top: 0; margin-right: 7px; }
.tools .t2 { border: 0; background: linear-gradient(90deg, #8fb988 60%, #ccc 60%); height: 2px; }
.tools .t3 { background: #dcebd9; }
.tools .t4 { border: 0; background: linear-gradient(90deg, #e08080 25%, #a0a0a0 25%); height: 3px; width: 9px; }
.tablebox { height: 792px; width: 1844.5px; flex: none; border: 1.5px solid #dee2e6; border-left: 0; border-radius: 0 9px 9px 0; overflow: hidden; }
table { table-layout: fixed; width: 1843px; border-collapse: separate; border-spacing: 0; color: #3f7b9b; font-size: 8.3px; line-height: 13px; }
thead tr { height: 62px; }
th { vertical-align: bottom; text-align: left; font-weight: 700; font-size: 8.2px; letter-spacing: -.08px; padding: 0 0 6px 8.5px; position: relative; white-space: nowrap; }
th::after { content: ""; position: absolute; left: 1px; right: 0; bottom: 0; height: 1px; background: #dcdfe2; }
th:first-child, td:first-child { padding-left: 0; }
.sort { position: absolute; right: 5px; bottom: 9px; fill: none; stroke: #c3d8e3; stroke-width: .6; opacity: .75; }
.sort .dn { stroke: #b0c3d0; }
.sort.on { opacity: 1; }
.sort.on .up { stroke: #3d5d80; }
td { vertical-align: top; padding: 3px 0 0 7.5px; border-top: 1px solid #fff; border-left: 1px solid #fff; white-space: nowrap; background: #fff; overflow: hidden; }
td:first-child { border-left: 0; }
.cut { margin-left: -2.5px; }
tbody tr:nth-child(odd) td { background: #f1f1f1; }

.pager { display: flex; height: 22px; margin: 5px 0 0 1442px; border: 1px solid #dee2e6; border-radius: 3px; width: 242px; color: #2bb3ea; font-size: 8.2px; line-height: 18px; flex: none; }
.pager span { display: flex; align-items: center; justify-content: center; border-right: 1px solid #dee2e6; flex: none; }
.pager span:last-child { border-right: 0; width: 34px; }
.pager .on { background: #2db5ea; color: #fff; font-weight: 700; margin: -1px 0; }
.pager .off { color: #8a99a6; }
.hscroll { margin-top: 2px; height: 21px; width: 1845px; background: #f1f1f1; display: flex; align-items: center; flex: none; }
.hthumb { width: 1666px; height: 17px; background: #c1c1c1; margin-left: 145px; }
.hscroll i { width: 0; height: 0; border: 5px solid transparent; }
.la { margin-left: 3px; border-right-color: #444 !important; }
.ra { margin-left: 8px; border-left-color: #999 !important; }
footer { margin: 13px 0 0 27px; font-size: 8.25px; line-height: 14px; font-weight: 700; letter-spacing: -.02px; color: #3f7b9b; position: relative; }

.notes { position: absolute; right: 0; top: 68px; width: 31px; height: 28px; background: #2db5ea; box-shadow: 0 2px 12px rgba(0, 0, 0, .15); }
.notes svg { position: absolute; left: 6px; top: 5px; }
.notes span { position: absolute; left: 3px; top: -2px; width: 11px; height: 15px; border-radius: 50%; background: #e0262c; color: #fff; font-size: 8px; line-height: 15px; font-weight: 700; text-align: center; }

.vscroll { width: 21px; background: #f1f1f1; display: flex; flex-direction: column; align-items: center; }
.vscroll i { width: 0; height: 0; border: 5px solid transparent; }
.ua { margin-top: 4px; border-bottom-color: #444 !important; }
.vthumb { width: 17px; height: 758px; margin-top: 139px; background: #c1c1c1; }
.da { margin-top: 8px; border-top-color: #999 !important; }

.taskbar { flex: none; height: 60px; display: flex; position: relative; color: #1a1a1a; background: linear-gradient(90deg, #e4ee94 0, #e6ef96 13%, #dfe8a8 22%, #dde6b0 27%, #e3ec9c 36%, #e7f093 50%, #e5ee98 68%, #dbe5b0 75%, #dce5b6 85%, #e4ed98 92%, #e6e994 100%); border-top: 1px solid #d3dba0; padding-bottom: 1px; }
.weather { width: 520px; padding-left: 35px; display: flex; align-items: center; gap: 18px; font-size: 14.5px; line-height: 20.5px; letter-spacing: 0; }
.dim { color: #55584a; letter-spacing: .1px; }
.apps { display: flex; }
.apps > span { width: 55px; display: flex; align-items: center; justify-content: center; position: relative; }
.apps svg { display: block; position: relative; }
.run::after { content: ""; position: absolute; bottom: 5px; left: 23.5px; width: 8px; height: 4px; border-radius: 2px; background: #85895e; }
.cur::before { content: ""; position: absolute; left: 4px; top: 5px; width: 43px; height: 48px; border-radius: 5px; background: rgba(255, 255, 255, .6); box-shadow: 4px 0 0 rgba(255, 255, 255, .35), inset -1px 0 #dfe8b8; }
.cur::after { left: 18px; width: 20px; background: #0a78d4; }
.apps span:last-child path { fill: none; stroke: #10220f; stroke-linecap: round; }
.tray { margin-left: auto; margin-right: 24px; display: flex; align-items: center; font-size: 14.5px; line-height: 20px; }
.cloud { margin-left: 10px; }
.lang { width: 30px; margin-left: 18px; text-align: center; letter-spacing: -.3px; }
.wifi { margin-left: 21px; }
.spk { margin-left: 8px; }
.bat { margin-left: 11px; }
.clock { width: 96px; text-align: right; letter-spacing: -.3px; }
.date { letter-spacing: .1px; }
.badge { margin-left: 9px; width: 20px; height: 20px; border-radius: 50%; background: #0078d7; color: #fff; font-size: 12px; display: flex; align-items: center; justify-content: center; }
</style>
